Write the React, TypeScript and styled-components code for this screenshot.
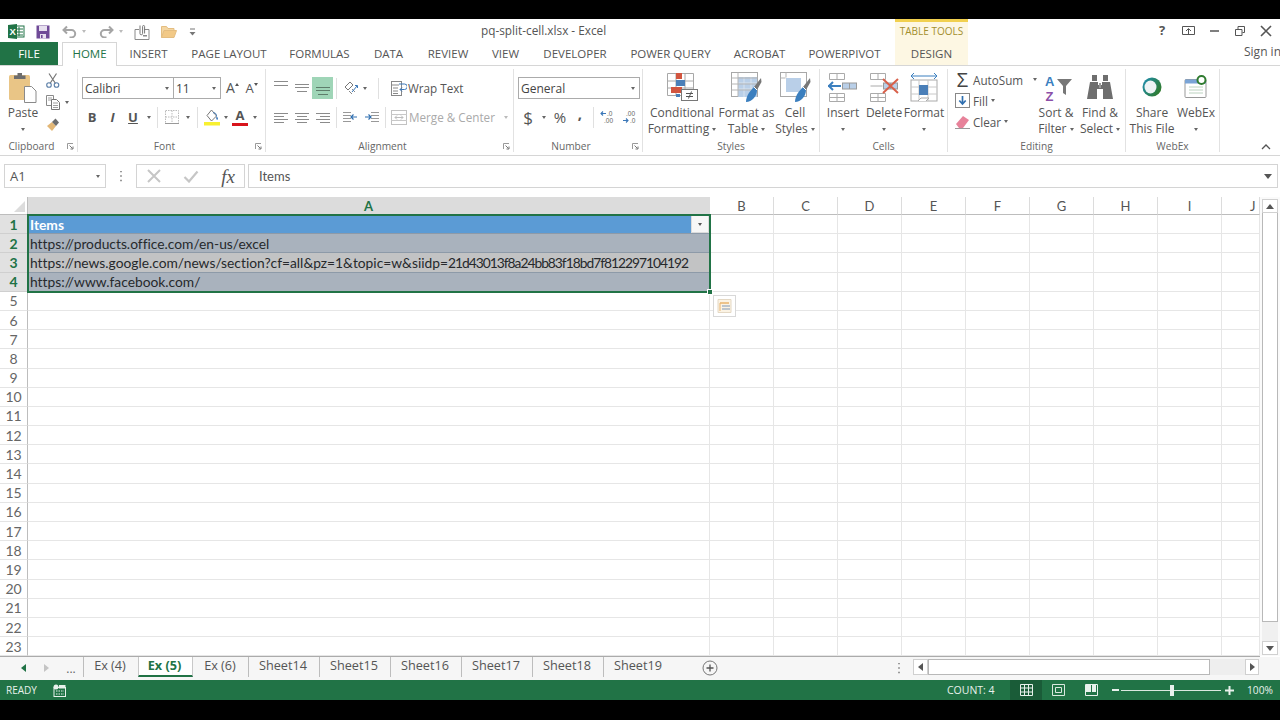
import React from "react";
import styled, { createGlobalStyle } from "styled-components";

const Global = createGlobalStyle`
  html, body { margin: 0; padding: 0; background: #000; overflow: hidden; }
  * { box-sizing: border-box; }
`;
const UI = `"Open Sans", "Noto Sans", "Liberation Sans", sans-serif`;
const INK = "#555";

const Page = styled.div`
  width: 1280px; height: 720px; background: #000; padding: 19px 0 20px;
  font-family: ${UI}; color: ${INK};
`;
const Win = styled.div`
  width: 1280px; height: 681px; background: #fff; display: flex; flex-direction: column; overflow: hidden;
`;
const Svg = styled.svg`display: block; flex: none;`;
const Ic = ({ w, h, children }: { w: number; h: number; children: React.ReactNode }) => (
  <Svg width={w} height={h} viewBox={`0 0 ${w} ${h}`} fill="none">{children}</Svg>
);
const Slot = styled.span<{ $w: number; $ml?: number }>`
  display: inline-flex; align-items: center; justify-content: center; flex: none;
  width: ${p => p.$w}px; height: 100%; margin-left: ${p => p.$ml ?? 0}px;
`;

/* ---- title bar ---- */
const TitleBar = styled.div`display: flex; height: 23px; align-items: stretch; background: #fff;`;
const Qat = styled.div`display: flex; width: 481px; padding-left: 8px; align-items: center; padding-top: 2px;`;
const TitleText = styled.div`width: 414px; font-size: 11.8px; line-height: 23px; color: #555; white-space: nowrap;`;
const TableTools = styled.div`
  width: 73px; background: #fdf7e3; border-top: 3px solid #f1d04f; color: #a38f2e;
  font-size: 10px; line-height: 19px; text-align: center; white-space: nowrap;
`;
const WinCtrls = styled.div`display: flex; margin-left: auto; width: 312px; padding-left: 188px; align-items: center;`;

/* ---- tabs ---- */
const TabRow = styled.div`display: flex; height: 24px; background: #fff; border-bottom: 1px solid #d6d6d6;`;
const FileTab = styled.div`
  width: 58px; height: 23px; background: #217346; color: #fff; font-size: 11.6px; line-height: 23px; text-align: center; margin-right: 4px;
`;
const Tab = styled.div<{ $w: number; $active?: boolean; $ctx?: boolean; $ml?: number }>`
  width: ${p => p.$w}px; height: ${p => (p.$active ? 24 : 23)}px; flex: none; text-align: center; font-size: 11.5px; line-height: 23px;
  white-space: nowrap; margin-left: ${p => p.$ml ?? 0}px;
  color: ${p => (p.$active ? "#217346" : "#555")};
  background: ${p => (p.$ctx ? "#fdf7e3" : "#fff")};
  ${p => (p.$active ? "border: 1px solid #d6d6d6; border-bottom: 0; line-height: 22px;" : "")}
`;
const SignIn = styled.div`margin-left: auto; font-size: 12px; line-height: 19px; color: #555; width: 36px; white-space: nowrap;`;

/* ---- ribbon ---- */
const Ribbon = styled.div`display: flex; height: 90px; padding-top: 3px; background: #fff; border-bottom: 1px solid #d6d6d6;`;
const Group = styled.div<{ $w: number; $last?: boolean }>`
  width: ${p => p.$w}px; height: 83px; flex: none; display: flex; flex-direction: column;
  border-right: ${p => (p.$last ? 0 : "1px solid #e2e2e2")};
`;
const GroupBody = styled.div`flex: 1; height: 70px; display: flex; min-height: 0;`;
const GroupFoot = styled.div`display: flex; height: 13px; padding-top: 2px; align-items: center; font-size: 10.2px; color: #666;`;
const FootLabel = styled.div`flex: 1; text-align: center; white-space: nowrap; line-height: 11px;`;
const Launcher = styled.div`width: 14px; display: flex; justify-content: center;`;
const CollapseWrap = styled.div`flex: 1; display: flex; justify-content: flex-end; padding-right: 9px;`;
const Big = styled.div<{ $w: number; $ml?: number }>`
  width: ${p => p.$w}px; flex: none; margin-left: ${p => p.$ml ?? 0}px; display: flex; flex-direction: column; align-items: center;
`;
const BigIcon = styled.div`height: 36px; display: flex; align-items: center; justify-content: center;`;
const BigLabel = styled.div`font-size: 12px; line-height: 16px; height: 16px; white-space: nowrap; text-align: center; color: #555;`;
const Caret = styled.span<{ $ml?: number; $c?: string; $up?: boolean; $raise?: number }>`
  display: inline-block; flex: none; width: 0; height: 0; vertical-align: middle;
  border-left: 2.5px solid transparent; border-right: 2.5px solid transparent;
  ${p => (p.$up ? `border-bottom: 3px solid ${p.$c ?? "#666"};` : `border-top: 3px solid ${p.$c ?? "#666"};`)}
  margin-left: ${p => p.$ml ?? 0}px; margin-bottom: ${p => p.$raise ?? 0}px;
`;
const Stack = styled.div<{ $pt?: number; $gap?: number; $pl?: number; $w?: number }>`
  display: flex; flex-direction: column; flex: none; padding-top: ${p => p.$pt ?? 8}px; padding-left: ${p => p.$pl ?? 0}px; gap: ${p => p.$gap ?? 7}px;
  ${p => (p.$w ? `width: ${p.$w}px;` : "")}
`;
const RRow = styled.div<{ $h?: number }>`display: flex; align-items: center; height: ${p => p.$h ?? 22}px;`;
const Sep = styled.span<{ $ml: number; $mr: number }>`
  display: block; flex: none; width: 1px; height: 21px; background: #e0e0e0; margin: 0 ${p => p.$mr}px 0 ${p => p.$ml}px;
`;
const Combo = styled.div<{ $w: number; $ml?: number }>`
  width: ${p => p.$w}px; height: 22px; flex: none; border: 1px solid #ababab; background: #fff; margin-left: ${p => p.$ml ?? 0}px;
  display: flex; align-items: center; justify-content: space-between; padding: 0 4px 0 2px; font-size: 12px; color: #444;
`;
const Glyph = styled.span<{ $bold?: boolean; $it?: boolean; $u?: boolean; $size?: number; $c?: string; $ff?: string; $raise?: number }>`
  font-size: ${p => p.$size ?? 13}px; font-weight: ${p => (p.$bold ? 700 : 400)}; font-style: ${p => (p.$it ? "italic" : "normal")};
  text-decoration: ${p => (p.$u ? "underline" : "none")}; color: ${p => p.$c ?? "#555"}; line-height: 1;
  font-family: ${p => p.$ff ?? UI}; margin-bottom: ${p => p.$raise ?? 0}px;
`;
const ColorA = styled.span`display: flex; flex-direction: column; align-items: center; width: 16px; flex: none;`;
const ColorBar = styled.span`display: block; width: 16px; height: 3px; background: #d8141c; margin-top: 1px;`;
const SmallBtn = styled.div<{ $grey?: boolean; $w?: number; $ml?: number }>`
  display: flex; align-items: center; gap: 2px; font-size: 11.7px; white-space: nowrap; color: ${p => (p.$grey ? "#aaa" : "#555")};
  width: ${p => (p.$w ? p.$w + "px" : "auto")}; margin-left: ${p => p.$ml ?? 0}px;
`;
const Highlight = styled.span`
  display: inline-flex; width: 21px; height: 22px; background: #9fd5b7; align-items: center; justify-content: center; flex: none;
`;

/* ---- formula bar ---- */
const FormulaBar = styled.div`display: flex; height: 41px; padding: 8px 2px 9px 4px; background: #fff;`;
const NameBox = styled.div`
  width: 102px; border: 1px solid #d4d4d4; display: flex; align-items: center; justify-content: space-between;
  padding: 0 5px; font-size: 13px; color: #555; background: #fff;
`;
const Grip = styled.div`width: 30px; display: flex; align-items: center; justify-content: center;`;
const FxBox = styled.div`
  width: 109px; border: 1px solid #d4d4d4; display: flex; align-items: center; justify-content: space-between; padding: 0 9px 0 10px;
`;
const FxInput = styled.div`
  flex: 1; margin-left: 3px; border: 1px solid #d4d4d4; display: flex; align-items: center; justify-content: space-between;
  padding: 0 5px 0 10px; font-size: 13px; color: #555; font-family: "Lato", ${UI};
`;

/* ---- sheet ---- */
const Sheet = styled.div`display: flex; height: 460px; background: #fff;`;
const Grid = styled.div`
  position: relative; width: 1260px; height: 460px; overflow: hidden; display: grid; border-bottom: 1px solid #ababab;
  grid-template-columns: 28px 682px repeat(8, 64px) 38px; grid-template-rows: 18px repeat(23, 19.2px);
`;
const ColHead = styled.div<{ $on?: boolean; $pl?: number }>`
  display: flex; align-items: center; justify-content: ${p => (p.$pl ? "flex-start" : "center")}; padding-left: ${p => p.$pl ?? 0}px;
  border-right: 1px solid #dcdcdc; border-bottom: 1px solid #bdbdbd; font-size: 13px; font-family: "Lato", ${UI};
  background: ${p => (p.$on ? "#dcdcdc" : "#fff")}; color: ${p => (p.$on ? "#217346" : "#555")}; font-weight: ${p => (p.$on ? 700 : 400)};
`;
const Corner = styled.div`
  background: #fff; border-right: 1px solid #bdbdbd; border-bottom: 1px solid #bdbdbd; display: flex; align-items: flex-end; justify-content: flex-end; padding: 0 2px 2px 0;
`;
const RowHead = styled.div<{ $on?: boolean }>`
  display: flex; align-items: center; justify-content: center; font-size: 14px; font-family: "Lato", ${UI};
  border-right: 1px solid #bdbdbd; border-bottom: 1px solid ${p => (p.$on ? "#cfcfcf" : "#e4e4e4")};
  background: ${p => (p.$on ? "#e1e1e1" : "#fff")}; color: ${p => (p.$on ? "#217346" : "#666")}; font-weight: ${p => (p.$on ? 700 : 400)};
`;
const Cell = styled.div<{ $tone?: string }>`
  display: flex; align-items: center; justify-content: space-between; white-space: nowrap; padding-left: 2px;
  border-right: 1px solid #e6e6e6; border-bottom: 1px solid #e6e6e6;
  background: ${p => (p.$tone === "head" ? "#5b9bd5" : p.$tone === "a" ? "#a9b2bd" : p.$tone === "b" ? "#c2c3c4" : "#fff")};
  ${p => (p.$tone ? "border-color: #8d9aa8;" : "")}
`;
const CellText = styled.span<{ $head?: boolean }>`
  font-family: "Lato", ${UI}; font-size: 13.8px; font-variant-ligatures: none; color: ${p => (p.$head ? "#fff" : "#26292c")}; font-weight: ${p => (p.$head ? 700 : 400)};
`;
const Tight = styled.span`letter-spacing: -1px;`;
const FilterBtn = styled.span`
  display: flex; width: 18px; height: 18px; background: #f7f7f7; align-items: center; justify-content: center; border: 1px solid #dcdcdc;
`;
const Selection = styled.div`
  position: absolute; left: 27px; top: 17px; width: 684px; height: 79px; border: 2px solid #217346; pointer-events: none;
`;
const FillHandle = styled.div`
  position: absolute; right: -4px; bottom: -4px; width: 6px; height: 6px; background: #217346; border: 1px solid #fff;
`;
const QuickBtn = styled.div`
  position: absolute; left: 713px; top: 98px; width: 23px; height: 22px; background: #fff; border: 1px solid #d8d8d8;
  display: flex; align-items: center; justify-content: center;
`;
const VScroll = styled.div`width: 20px; display: flex; flex-direction: column; padding: 2px 2px 1px; background: #fafafa; border-bottom: 1px solid #fff;`;
const ScrollBtn = styled.div<{ $w?: number; $h?: number }>`
  width: ${p => p.$w ?? 16}px; height: ${p => p.$h ?? 14}px; flex: none; background: #fff; border: 1px solid #d0d0d0; display: flex; align-items: center; justify-content: center;
`;
const VThumb = styled.div`width: 16px; height: 409px; margin-top: 0; background: #fff; border: 1px solid #b8b8b8; border-top: 0; flex: none;`;
const VTrack = styled.div`flex: 1; background: #f0f0f0;`;

/* ---- sheet tabs ---- */
const TabsBar = styled.div`display: flex; height: 23px; background: #f6f6f6; align-items: stretch;`;
const Nav = styled.div`width: 83px; display: flex; align-items: center; padding-left: 21px; padding-bottom: 1px; flex: none; font-size: 12px; color: #666;`;
const SheetTab = styled.div<{ $w: number; $on?: boolean; $sep?: boolean }>`
  width: ${p => p.$w}px; flex: none; height: 20px; padding: 0 2px ${p => (p.$on ? 2 : 4)}px 0; display: flex; align-items: center; justify-content: center; font-size: 12.7px; white-space: nowrap;
  color: ${p => (p.$on ? "#217346" : "#555")}; font-weight: ${p => (p.$on ? 700 : 400)};
  background: ${p => (p.$on ? "#fff" : "transparent")};
  border-left: 1px solid ${p => (p.$sep ? "#bdbdbd" : "transparent")};
  ${p => (p.$on ? "border-bottom: 2px solid #217346; border-left: 1px solid #c8c8c8; border-right: 1px solid #c8c8c8;" : "")}
`;
const AddSheet = styled.div`width: 18px; height: 16px; margin: 3px 0 0 27px; flex: none;`;
const HDots = styled.div`margin-left: 173px; width: 14px; display: flex; align-items: center; justify-content: center; flex: none;`;
const HScroll = styled.div`width: 346px; margin-left: 7px; height: 16px; margin-top: 2px; display: flex; background: #eeeeee; flex: none;`;
const HThumb = styled.div`width: 282px; height: 16px; background: #fff; border: 1px solid #b8b8b8;`;
const HTrack = styled.div`flex: 1;`;

/* ---- status ---- */
const Status = styled.div`display: flex; height: 20px; background: #217346; color: #e8f1ec; align-items: center; font-size: 10.5px;`;
const Ready = styled.span`margin-left: 6px; width: 47px; font-size: 10px;`;
const Count = styled.span`margin-left: 881px; width: 63px; font-size: 10.5px; white-space: nowrap;`;
const ViewBtn = styled.div<{ $on?: boolean; $w: number }>`
  width: ${p => p.$w}px; height: 20px; flex: none; display: flex; align-items: center; justify-content: center; background: ${p => (p.$on ? "#1a5c38" : "transparent")};
`;
const ZoomTrack = styled.div`position: relative; width: 100px; height: 1px; background: #d9e8df; margin: 0 2px; flex: none;`;
const ZoomThumb = styled.div`position: absolute; left: 49px; top: -5px; width: 4px; height: 11px; background: #e8f1ec;`;
const Pct = styled.span`margin-left: 14px; font-size: 10.2px; white-space: nowrap;`;

/* ---- icons ---- */
const ExcelLogo = () => (
  <Ic w={17} h={15}>
    <rect x="7" y="2" width="9" height="11" fill="#fff" stroke="#217346" />
    <path d="M8 5h7M8 8h7M8 11h7M11 3v9" stroke="#217346" />
    <path d="M0 1l9-1v15l-9-1z" fill="#217346" />
    <text x="1.6" y="11" fontSize="9.5" fontWeight="700" fill="#fff" fontFamily="Liberation Sans">X</text>
  </Ic>
);
const Floppy = () => (
  <Ic w={14} h={14}>
    <rect x="0.5" y="0.5" width="13" height="13" fill="#6f4a97" />
    <rect x="3" y="1" width="8" height="5" fill="#e7e0ef" />
    <rect x="4" y="9" width="6" height="4.5" fill="#e7e0ef" />
    <rect x="5" y="10" width="1.6" height="3" fill="#6f4a97" />
  </Ic>
);
const Undo = ({ flip }: { flip?: boolean }) => (
  <Ic w={15} h={13}>
    <g transform={flip ? "translate(15 0) scale(-1 1)" : undefined}>
      <path d="M5 1.5L1.5 5 5 8.5M1.5 5H9.5a3.7 3.7 0 0 1 0 7.4H7.5" stroke="#a5a5a5" strokeWidth="2" />
    </g>
  </Ic>
);
const Attach = () => (
  <Ic w={16} h={16}>
    <path d="M1 5.5h4M10 5.5h5v10H1v-10" stroke="#8a8a8a" />
    <path d="M6 1.5v8a1.3 1.3 0 0 0 2.6 0V2.5a1 1 0 0 1 2 0v7" stroke="#777" fill="none" />
    <rect x="9" y="11" width="4" height="1.5" fill="#8a8a8a" />
  </Ic>
);
const Folder = () => (
  <Ic w={16} h={13}>
    <path d="M0.5 12.5V1.5h5l1.5 2h6v2" fill="#f4d6a2" stroke="#e4bd80" />
    <path d="M0.5 12.5l2.5-7h12.5l-2.5 7z" fill="#f2c987" stroke="#e4bd80" />
  </Ic>
);
const QatMore = () => (
  <Ic w={7} h={8}>
    <path d="M1 1h5" stroke="#777" /><path d="M0.5 4h6l-3 3.5z" fill="#777" />
  </Ic>
);
const Paste = () => (
  <Ic w={28} h={31}>
    <rect x="0" y="3" width="21" height="25" rx="1.5" fill="#e9c586" />
    <path d="M5 3.5h3.5V1h4.5v2.5h3.5V7H5z" fill="#6d6d6d" />
    <path d="M15.5 14.5h7l4.5 4.5v11.5H15.5z" fill="#fff" stroke="#8a8a8a" />
  </Ic>
);
const Scissors = () => (
  <Ic w={14} h={15}>
    <path d="M3 0.5l6.5 10M10.5 0.5l-6.5 10" stroke="#777" strokeWidth="1.2" />
    <circle cx="3" cy="12" r="2.3" stroke="#5b7fa8" strokeWidth="1.1" />
    <circle cx="10.5" cy="12" r="2.3" stroke="#5b7fa8" strokeWidth="1.1" />
  </Ic>
);
const Copy = () => (
  <Ic w={15} h={15}>
    <path d="M0.5 0.5h7v10h-7z" fill="#fff" stroke="#8a8a8a" />
    <path d="M5.5 4.5h5l3 3v7h-8z" fill="#fff" stroke="#777" />
    <path d="M2 3h4M2 5h3M7 8h5M7 10.5h5M7 12.5h5" stroke="#a0a0a0" />
  </Ic>
);
const Painter = () => (
  <Ic w={14} h={13}>
    <path d="M1 8l5-4 4 4-4 5z" fill="#e3b776" />
    <path d="M6 4l4 4 3-3.5-3.5-4z" fill="#6d6d6d" />
  </Ic>
);
const Launch = () => (
  <Ic w={7} h={7}>
    <path d="M0.5 6V0.5H6" stroke="#9a9a9a" /><path d="M2.5 2.5l3 3M6 3.5V6H3.5" stroke="#777" />
  </Ic>
);
const Borders = () => (
  <Ic w={14} h={14}>
    <path d="M.5.5h13v13H.5z" stroke="#bbb" strokeDasharray="1.5 1" />
    <path d="M7 .5v13M.5 7h13" stroke="#bbb" strokeDasharray="1.5 1" />
    <path d="M0 13.5h14" stroke="#999" />
  </Ic>
);
const FillColor = () => (
  <Ic w={17} h={17}>
    <path d="M7.5 1l5 6-5 5-4.5-5.5z" fill="#fff" stroke="#777" />
    <path d="M12.5 7c1.5 2 2 3 1 3.7-1 .5-1.7-.7-1-3.7z" fill="#3b77b8" />
    <path d="M9 4c2-1 3.5 1 3.5 3" stroke="#3b77b8" />
    <rect x="0" y="13" width="16" height="3.5" fill="#f8f030" />
  </Ic>
);
const Lines = ({ rows, c = "#8b8b8b", w = 14, h = 14 }: { rows: number[][]; c?: string; w?: number; h?: number }) => (
  <Ic w={w} h={h}>
    {rows.map(([a, b, y], i) => <path key={i} d={`M${a} ${y}H${b}`} stroke={c} strokeWidth="1" />)}
  </Ic>
);
const Orientation = () => (
  <Ic w={15} h={14}>
    <path d="M1 6l5-5 3 3-5 5z" stroke="#777" />
    <path d="M5 10l3 3M8 8l3 3" stroke="#888" />
    <path d="M8 11l5-6M11 4.5h2.5V7" stroke="#3b77b8" />
  </Ic>
);
const WrapIcon = () => (
  <Ic w={16} h={15}>
    <rect x="0.5" y="0.5" width="10" height="14" fill="#fff" stroke="#888" />
    <path d="M0 4h8M2 7h5M2 10h5M2 12.5h5" stroke="#888" />
    <path d="M8 3h5.5a2 2 0 0 1 0 5.5H9M11 6.5L9 8.5l2 2" stroke="#3b77b8" />
  </Ic>
);
const Indent = ({ flip }: { flip?: boolean }) => (
  <Ic w={15} h={11}>
    <g transform={flip ? "translate(15 0) scale(-1 1)" : undefined}>
      <path d="M7 .5h8M7 3.5h8M7 6.5h8M7 9.5h8" stroke="#999" />
      <path d="M1 5h6M4.5 2.5L7 5 4.5 7.5" stroke="#2f6fb0" strokeWidth="1.2" />
    </g>
  </Ic>
);
const MergeIcon = () => (
  <Ic w={16} h={15}>
    <rect x="0.5" y="0.5" width="15" height="14" stroke="#c2c2c2" />
    <path d="M0 4.5h16M0 10.5h16" stroke="#c8c8c8" />
    <path d="M4 7.5h8M4 7.5l2-2M4 7.5l2 2M12 7.5l-2-2M12 7.5l-2 2" stroke="#bdbdbd" />
  </Ic>
);
const DecInc = ({ flip }: { flip?: boolean }) => (
  <Ic w={15} h={14}>
    {flip ? <path d="M1 10.5h5M4 8.5l2 2-2 2" stroke="#3b77b8" strokeWidth="1.1" /> : <path d="M1 3.5h5M3 1.5l-2 2 2 2" stroke="#3b77b8" strokeWidth="1.1" />}
    <text x={flip ? 4 : 7} y="6" fontSize="6.5" fill="#666" fontFamily="Liberation Sans">{flip ? ".00" : ".0"}</text>
    <text x={flip ? 8 : 4} y="13" fontSize="6.5" fill="#666" fontFamily="Liberation Sans">{flip ? ".0" : ".00"}</text>
  </Ic>
);
const CondFmt = () => (
  <Ic w={31} h={28}>
    <path d="M.5.5h26v22H.5zM9 .5v22M18 .5v22M.5 8h26M.5 15h26" stroke="#a8a8a8" />
    <rect x="9" y="0" width="6" height="6" fill="#d2553f" /><rect x="9" y="7" width="9" height="6" fill="#4a7fb8" />
    <rect x="4" y="14" width="5" height="6" fill="#d2553f" /><rect x="9" y="14" width="6" height="6" fill="#d2553f" /><rect x="9" y="21" width="4" height="3" fill="#4a7fb8" />
    <rect x="14.5" y="16.5" width="16" height="11" fill="#fff" stroke="#777" />
    <path d="M19 20.5h7M19 23.5h7M24.5 18.5l-3 7" stroke="#555" />
  </Ic>
);
const TableFmt = ({ inset }: { inset?: boolean }) => (
  <Ic w={31} h={31}>
    <rect x="0.5" y="0.5" width="26" height="24" fill="#fff" stroke="#a8a8a8" />
    {inset ? <rect x="6" y="6" width="15" height="14" fill="#b9cfe8" /> : <rect x="7" y="5" width="19" height="20" fill="#b9cfe8" />}
    {!inset && <path d="M7 11h19M7 17h19M13 5v20M20 5v20" stroke="#d8e3ef" />}
    {!inset && <path d="M.5 6h26M.5 12h26M.5 18h26M7 .5v24" stroke="#b5b5b5" />}
    {inset && <path d="M.5 6h5M6 .5v5" stroke="#b5b5b5" />}
    <path d="M30 6l-7 9 3 3 4.5-8z" fill="#777" />
    <path d="M15 30c0-7 5-12 8-15l3 3c0 6-5 12-11 12z" fill="#3b7fbf" />
    <path d="M23 15l3 3" stroke="#fff" />
  </Ic>
);
const CellOps = ({ kind }: { kind: "ins" | "del" }) => (
  <Ic w={30} h={30}>
    <path d="M1.5 1.5h15v6h-15zM9 1.5v6M1.5 21.5h15v8h-15zM1.5 25.5h15M9 21.5v8" stroke="#aaa" />
    <rect x="14.5" y="11" width="14" height="6" fill="#b9cfe8" stroke="#9a9a9a" />
    <path d="M21.5 11v6" stroke="#9a9a9a" />
    {kind === "ins"
      ? <path d="M0 14h13M5 10l-4 4 4 4" stroke="#3b7fbf" strokeWidth="2" />
      : <path d="M14 7l15 14M29 7L14 21" stroke="#d8604a" strokeWidth="2" />}
    {kind === "del" && <path d="M1.5 14h12" stroke="#aaa" />}
  </Ic>
);
const FormatIco = () => (
  <Ic w={28} h={30}>
    <path d="M1 4h26M1 4l3-3M1 4l3 3M27 4l-3-3M27 4l-3 3" stroke="#3b7fbf" />
    <rect x="1" y="8" width="26" height="21" fill="#fff" stroke="#aaa" />
    <path d="M1 15h26M1 22h26M9 8v21M18 8v21" stroke="#c8c8c8" />
    <rect x="9" y="13" width="9" height="10" fill="#4a7fb8" />
    <path d="M8 29l3-3h8l-3 3" fill="#fff" stroke="#aaa" />
  </Ic>
);
const FillDown = () => (
  <Ic w={15} h={15}>
    <rect x="0.5" y="0.5" width="14" height="14" fill="#fff" stroke="#888" />
    <path d="M7.5 3v8M4.3 7.5l3.2 3.5 3.2-3.5" stroke="#2f6fb0" strokeWidth="1.7" />
  </Ic>
);
const Eraser = () => (
  <Ic w={15} h={14}>
    <path d="M1 9l7-8 6 4-6 8H4z" fill="#e7829a" />
    <path d="M0 13.5h15" stroke="#999" />
  </Ic>
);
const SortIco = () => (
  <Ic w={36} h={29}>
    <text x="7" y="12.5" fontSize="13" fontWeight="700" fill="#3b7fbf" fontFamily="Liberation Sans">A</text>
    <text x="7.5" y="27.5" fontSize="13" fontWeight="700" fill="#8b4fa8" fontFamily="Liberation Sans">Z</text>
    <path d="M19 6h15l-6 7v9l-3-2v-7z" fill="#777" />
  </Ic>
);
const Binoculars = () => (
  <Ic w={28} h={26}>
    <path d="M6 1h5v6H6zM17 1h5v6h-5z" fill="#6e6e6e" />
    <path d="M4 8h8v3h4V8h8l3 17h-10v-10h-6v10H1z" fill="#6e6e6e" />
    <path d="M13 9h2v5h-2z" fill="#9a9a9a" />
  </Ic>
);
const WebexBall = () => (
  <Ic w={20} h={20}>
    <defs>
      <linearGradient id="wx" x1="0" y1="0" x2="1" y2="0.6"><stop offset="0" stopColor="#1d8fb8" /><stop offset="1" stopColor="#2f7b2f" /></linearGradient>
    </defs>
    <circle cx="10" cy="10" r="9.5" fill="url(#wx)" />
    <ellipse cx="8.5" cy="10" rx="6" ry="6.5" fill="#eef3f5" />
  </Ic>
);
const WebexWin = () => (
  <Ic w={24} h={24}>
    <rect x="1" y="4.5" width="21" height="18" rx="1" fill="#fff" stroke="#999" />
    <rect x="1" y="4.5" width="21" height="4" fill="#7aa4d6" />
    <path d="M5 12h14M5 15h14M5 18h14" stroke="#bcd3c0" />
    <circle cx="17.5" cy="5" r="4" fill="#fff" stroke="#2f7b2f" strokeWidth="2" />
  </Ic>
);
const X = ({ c = "#555", s = 12, sw = 1.6 }: { c?: string; s?: number; sw?: number }) => (
  <Ic w={s} h={s}><path d={`M1 1L${s - 1} ${s - 1}M${s - 1} 1L1 ${s - 1}`} stroke={c} strokeWidth={sw} /></Ic>
);
const Check = () => (
  <Ic w={16} h={13}><path d="M1.5 7l4.5 4.5L14.5 1.5" stroke="#c6c6c6" strokeWidth="2.2" /></Ic>
);
const Dots = ({ c = "#999" }: { c?: string }) => (
  <Ic w={2} h={11}><path d="M0 .5h2M0 5h2M0 9.5h2" stroke={c} strokeWidth="1.5" /></Ic>
);
const Tri = ({ d, c = "#666" }: { d: "l" | "r" | "u" | "d"; c?: string }) => {
  const p = { l: "M5 0v8L0 4z", r: "M0 0v8l5-4z", u: "M0 5h8L4 0z", d: "M0 0h8L4 5z" }[d];
  const horiz = d === "l" || d === "r";
  return <Ic w={horiz ? 5 : 8} h={horiz ? 8 : 5}><path d={p} fill={c} /></Ic>;
};
const Quick = () => (
  <Ic w={15} h={14}>
    <path d="M1 .5h13v13H1z" fill="#fbf3e4" stroke="#e4d8c4" />
    <path d="M3 4h9" stroke="#e9b36c" strokeWidth="1.5" /><path d="M5 7h8M5 10h8" stroke="#a9b6c4" strokeWidth="1.5" /><path d="M3 4v8" stroke="#e9b36c" />
  </Ic>
);
const NormalView = () => (
  <Ic w={13} h={12}><path d="M.5.5h12v11H.5zM.5 4h12M.5 8h12M4.5.5v11M8.5.5v11" stroke="#e8f1ec" /></Ic>
);
const LayoutView = () => (
  <Ic w={13} h={12}><path d="M.5.5h12v11H.5z" stroke="#d9e8df" /><path d="M3.5 3.5h6v5h-6z" stroke="#d9e8df" /></Ic>
);
const BreakView = () => (
  <Ic w={13} h={12}><path d="M.5.5h12v11H.5z" stroke="#e8f1ec" /><rect x="1" y="0" width="5" height="8" fill="#e8f1ec" /><rect x="7" y="0" width="4" height="8" fill="#e8f1ec" /></Ic>
);
const MacroIco = () => (
  <Ic w={13} h={13}>
    <circle cx="3" cy="3" r="2.5" fill="#e8f1ec" />
    <rect x="1" y="3.5" width="11.5" height="9" fill="none" stroke="#e8f1ec" />
    <rect x="6" y="1" width="6.5" height="3.5" fill="#e8f1ec" />
    <path d="M3 7h8M3 10h8" stroke="#e8f1ec" strokeDasharray="1.5 1" />
  </Ic>
);

/* ---- data ---- */
const tabs: [string, number][] = [
  ["INSERT", 63], ["PAGE LAYOUT", 98], ["FORMULAS", 83], ["DATA", 55], ["REVIEW", 64], ["VIEW", 51],
  ["DEVELOPER", 88], ["POWER QUERY", 103], ["ACROBAT", 75], ["POWERPIVOT", 95],
];
const cols = ["B", "C", "D", "E", "F", "G", "H", "I"];
const urls: Record<number, React.ReactNode> = {
  2: "https://products.office.com/en-us/excel",
  3: <>https://news.google.com/news/section?cf=all&amp;pz=1&amp;topic=w&amp;siidp=<Tight>21d43013f8a24bb83f18bd7f812297104192</Tight></>,
  4: "https://www.facebook.com/",
};
const sheets: [string, number, boolean?][] = [["Ex (4)", 55], ["Ex (5)", 55, true], ["Ex (6)", 55], ["Sheet14", 71], ["Sheet15", 71], ["Sheet16", 71], ["Sheet17", 71], ["Sheet18", 71], ["Sheet19", 71]];

const Foot = ({ label, launch }: { label: string; launch?: boolean }) => (
  <GroupFoot>
    <FootLabel>{label}</FootLabel>
    {launch && <Launcher><Launch /></Launcher>}
  </GroupFoot>
);

export default function App() {
  return (
    <Page>
      <Global />
      <Win>
        <TitleBar>
          <Qat>
            <ExcelLogo />
            <Slot $w={14} $ml={11}><Floppy /></Slot>
            <Slot $w={15} $ml={12}><Undo /></Slot>
            <Slot $w={7} $ml={3}><Caret $c="#bbb" /></Slot>
            <Slot $w={15} $ml={12}><Undo flip /></Slot>
            <Slot $w={7} $ml={3}><Caret $c="#bbb" /></Slot>
            <Slot $w={16} $ml={10}><Attach /></Slot>
            <Slot $w={16} $ml={11}><Folder /></Slot>
            <Slot $w={7} $ml={12}><QatMore /></Slot>
          </Qat>
          <TitleText>pq-split-cell.xlsx - Excel</TitleText>
          <TableTools>TABLE TOOLS</TableTools>
          <WinCtrls>
            <Slot $w={14} $ml={-1}><Glyph $size={13} $bold>?</Glyph></Slot>
            <Slot $w={14} $ml={12}>
              <Ic w={13} h={9}><path d="M.5.5h12v8H.5z" stroke="#555" /><path d="M6.5 8V3M4 5l2.5-2.5L9 5" stroke="#555" /></Ic>
            </Slot>
            <Slot $w={12} $ml={13}><Ic w={9} h={2}><path d="M0 1h9" stroke="#555" strokeWidth="1.5" /></Ic></Slot>
            <Slot $w={12} $ml={14}>
              <Ic w={10} h={10}><path d="M.5 3.5h6.5v6H.5zM3 3V.5h6.5v6H7.5" stroke="#555" /></Ic>
            </Slot>
            <Slot $w={12} $ml={14}><X /></Slot>
          </WinCtrls>
        </TitleBar>

        <TabRow>
          <FileTab>FILE</FileTab>
          <Tab $w={55} $active>HOME</Tab>
          {tabs.map(([t, w]) => <Tab key={t} $w={w}>{t}</Tab>)}
          <Tab $w={73} $ctx $ml={3}>DESIGN</Tab>
          <SignIn>Sign in</SignIn>
        </TabRow>

        <Ribbon>
          <Group $w={78}>
            <GroupBody>
              <Big $w={46}>
                <BigIcon><Paste /></BigIcon>
                <BigLabel>Paste</BigLabel>
                <BigLabel><Caret /></BigLabel>
              </Big>
              <Stack $pt={3} $gap={5}>
                <RRow $h={17}><Scissors /></RRow>
                <RRow $h={17}><Copy /><Caret $ml={4} /></RRow>
                <RRow $h={17}><Painter /></RRow>
              </Stack>
            </GroupBody>
            <Foot label="Clipboard" launch />
          </Group>

          <Group $w={188}>
            <GroupBody>
              <Stack $pl={4}>
                <RRow>
                  <Combo $w={92}>Calibri<Caret /></Combo>
                  <Combo $w={48} $ml={-1}>11<Caret /></Combo>
                  <Slot $w={19} $ml={2}><Glyph $size={14}>A</Glyph><Caret $c="#555" $up $raise={8} /></Slot>
                  <Slot $w={19}><Glyph $size={13}>A</Glyph><Caret $c="#555" $raise={8} /></Slot>
                </RRow>
                <RRow>
                  <Slot $w={20}><Glyph $bold $size={13}>B</Glyph></Slot>
                  <Slot $w={21}><Glyph $it $bold $size={13}>I</Glyph></Slot>
                  <Slot $w={20}><Glyph $u $bold $size={13}>U</Glyph></Slot>
                  <Slot $w={11}><Caret /></Slot>
                  <Sep $ml={3} $mr={3} />
                  <Slot $w={21}><Borders /></Slot>
                  <Slot $w={11}><Caret /></Slot>
                  <Sep $ml={4} $mr={5} />
                  <Slot $w={18}><FillColor /></Slot>
                  <Slot $w={10}><Caret /></Slot>
                  <Slot $w={20} $ml={-1}>
                    <ColorA>
                      <Glyph $size={13} $bold>A</Glyph>
                      <ColorBar />
                    </ColorA>
                  </Slot>
                  <Slot $w={10}><Caret /></Slot>
                </RRow>
              </Stack>
            </GroupBody>
            <Foot label="Font" launch />
          </Group>

          <Group $w={248}>
            <GroupBody>
              <Stack $pl={5}>
                <RRow>
                  <Slot $w={20}><Lines rows={[[0, 14, 0.5], [0, 14, 4.5]]} /></Slot>
                  <Slot $w={21}><Lines rows={[[0, 14, 3.5], [0, 14, 6.5], [2, 12, 10.5]]} /></Slot>
                  <Highlight><Lines c="#5d7d6a" rows={[[0, 14, 6.5], [0, 14, 9.5], [2, 12, 13.5]]} /></Highlight>
                  <Sep $ml={3} $mr={6} />
                  <Slot $w={16}><Orientation /></Slot>
                  <Slot $w={11}><Caret /></Slot>
                  <Sep $ml={8} $mr={12} />
                  <WrapIcon />
                  <SmallBtn $ml={1}>Wrap Text</SmallBtn>
                </RRow>
                <RRow>
                  <Slot $w={20}><Lines rows={[[0, 14, 3.5], [0, 10, 6.5], [0, 14, 9.5], [0, 10, 12.5]]} /></Slot>
                  <Slot $w={21}><Lines rows={[[0, 14, 3.5], [2, 12, 6.5], [0, 14, 9.5], [2, 12, 12.5]]} /></Slot>
                  <Slot $w={21}><Lines rows={[[0, 14, 3.5], [4, 14, 6.5], [0, 14, 9.5], [4, 14, 12.5]]} /></Slot>
                  <Sep $ml={3} $mr={6} />
                  <Slot $w={15}><Indent flip /></Slot>
                  <Slot $w={15} $ml={6}><Indent /></Slot>
                  <Sep $ml={6} $mr={5} />
                  <MergeIcon />
                  <SmallBtn $grey $ml={2}>Merge &amp; Center<Caret $ml={7} $c="#bbb" /></SmallBtn>
                </RRow>
              </Stack>
            </GroupBody>
            <Foot label="Alignment" launch />
          </Group>

          <Group $w={129}>
            <GroupBody>
              <Stack $pl={4}>
                <RRow><Combo $w={122}>General<Caret /></Combo></RRow>
                <RRow>
                  <Slot $w={20}><Glyph $size={17}>$</Glyph></Slot>
                  <Slot $w={12}><Caret /></Slot>
                  <Slot $w={20}><Glyph $size={15}>%</Glyph></Slot>
                  <Slot $w={20}><Glyph $size={15} $bold $raise={8}>,</Glyph></Slot>
                  <Sep $ml={3} $mr={6} />
                  <Slot $w={15}><DecInc /></Slot>
                  <Slot $w={15} $ml={7}><DecInc flip /></Slot>
                </RRow>
              </Stack>
            </GroupBody>
            <Foot label="Number" launch />
          </Group>

          <Group $w={177}>
            <GroupBody>
              <Big $w={78}>
                <BigIcon><CondFmt /></BigIcon>
                <BigLabel>Conditional</BigLabel>
                <BigLabel>Formatting <Caret /></BigLabel>
              </Big>
              <Big $w={51}>
                <BigIcon><TableFmt /></BigIcon>
                <BigLabel>Format as</BigLabel>
                <BigLabel>Table <Caret /></BigLabel>
              </Big>
              <Big $w={46}>
                <BigIcon><TableFmt inset /></BigIcon>
                <BigLabel>Cell</BigLabel>
                <BigLabel>Styles <Caret /></BigLabel>
              </Big>
            </GroupBody>
            <Foot label="Styles" />
          </Group>

          <Group $w={128}>
            <GroupBody>
              <Big $w={46}>
                <BigIcon><CellOps kind="ins" /></BigIcon>
                <BigLabel>Insert</BigLabel>
                <BigLabel><Caret /></BigLabel>
              </Big>
              <Big $w={36}>
                <BigIcon><CellOps kind="del" /></BigIcon>
                <BigLabel>Delete</BigLabel>
                <BigLabel><Caret /></BigLabel>
              </Big>
              <Big $w={44}>
                <BigIcon><FormatIco /></BigIcon>
                <BigLabel>Format</BigLabel>
                <BigLabel><Caret /></BigLabel>
              </Big>
            </GroupBody>
            <Foot label="Cells" />
          </Group>

          <Group $w={178}>
            <GroupBody>
              <Stack $pt={0} $gap={0} $pl={7} $w={86}>
                <RRow $h={21}><Slot $w={15}><Glyph $size={20} $c="#444">Σ</Glyph></Slot><SmallBtn $ml={3}>AutoSum<Caret $ml={8} /></SmallBtn></RRow>
                <RRow $h={21}><FillDown /><SmallBtn $ml={3}>Fill<Caret $ml={1} /></SmallBtn></RRow>
                <RRow $h={21}><Eraser /><SmallBtn $ml={3}>Clear<Caret $ml={1} /></SmallBtn></RRow>
              </Stack>
              <Big $w={44}>
                <BigIcon><SortIco /></BigIcon>
                <BigLabel>Sort &amp;</BigLabel>
                <BigLabel>Filter <Caret /></BigLabel>
              </Big>
              <Big $w={44}>
                <BigIcon><Binoculars /></BigIcon>
                <BigLabel>Find &amp;</BigLabel>
                <BigLabel>Select <Caret /></BigLabel>
              </Big>
            </GroupBody>
            <Foot label="Editing" />
          </Group>

          <Group $w={94}>
            <GroupBody>
              <Big $w={52}>
                <BigIcon><WebexBall /></BigIcon>
                <BigLabel>Share</BigLabel>
                <BigLabel>This File</BigLabel>
              </Big>
              <Big $w={36}>
                <BigIcon><WebexWin /></BigIcon>
                <BigLabel>WebEx</BigLabel>
                <BigLabel><Caret /></BigLabel>
              </Big>
            </GroupBody>
            <Foot label="WebEx" />
          </Group>

          <Group $w={60} $last>
            <GroupBody />
            <GroupFoot>
              <CollapseWrap>
                <Ic w={10} h={6}><path d="M1 5l4-4 4 4" stroke="#555" strokeWidth="1.3" /></Ic>
              </CollapseWrap>
            </GroupFoot>
          </Group>
        </Ribbon>

        <FormulaBar>
          <NameBox>A1<Caret /></NameBox>
          <Grip><Dots /></Grip>
          <FxBox>
            <X c="#c6c6c6" s={14} sw={2} />
            <Check />
            <Glyph $size={19} $it $ff={`"Liberation Serif", serif`} $c="#555">fx</Glyph>
          </FxBox>
          <FxInput>Items<Tri d="d" c="#555" /></FxInput>
        </FormulaBar>

        <Sheet>
          <Grid>
            <Corner><Ic w={11} h={11}><path d="M11 0v11H0z" fill="#dcdcdc" /></Ic></Corner>
            <ColHead $on>A</ColHead>
            {cols.map(c => <ColHead key={c}>{c}</ColHead>)}
            <ColHead $pl={28}>J</ColHead>
            {Array.from({ length: 23 }, (_, i) => i + 1).map(r => {
              const on = r <= 4;
              const tone = r === 1 ? "head" : r === 3 ? "b" : on ? "a" : undefined;
              return (
                <React.Fragment key={r}>
                  <RowHead $on={on}>{r}</RowHead>
                  <Cell $tone={tone}>
                    {r === 1 && <CellText $head>Items</CellText>}
                    {urls[r] && <CellText>{urls[r]}</CellText>}
                    {r === 1 && <FilterBtn><Caret $c="#555" /></FilterBtn>}
                  </Cell>
                  {cols.map(c => <Cell key={c} />)}
                  <Cell />
                </React.Fragment>
              );
            })}
            <Selection><FillHandle /></Selection>
            <QuickBtn><Quick /></QuickBtn>
          </Grid>
          <VScroll>
            <ScrollBtn><Tri d="u" c="#555" /></ScrollBtn>
            <VThumb />
            <VTrack />
            <ScrollBtn><Tri d="d" c="#555" /></ScrollBtn>
          </VScroll>
        </Sheet>

        <TabsBar>
          <Nav>
            <Tri d="l" c="#217346" />
            <Slot $w={5} $ml={18}><Tri d="r" c="#c4c4c4" /></Slot>
            <Slot $w={14} $ml={15}>...</Slot>
          </Nav>
          {sheets.map(([n, w, on], i) => (
            <SheetTab key={n} $w={w} $on={!!on} $sep={!on && i !== 2}>{n}</SheetTab>
          ))}
          <AddSheet>
            <Ic w={18} h={16}>
              <circle cx="9" cy="8" r="7" stroke="#777" /><path d="M9 4.5v7M5.5 8h7" stroke="#555" strokeWidth="1.3" />
            </Ic>
          </AddSheet>
          <HDots><Dots /></HDots>
          <HScroll>
            <ScrollBtn $w={15} $h={16}><Tri d="l" c="#555" /></ScrollBtn>
            <HThumb />
            <HTrack />
            <ScrollBtn $w={14} $h={16}><Tri d="r" c="#555" /></ScrollBtn>
          </HScroll>
        </TabsBar>

        <Status>
          <Ready>READY</Ready>
          <MacroIco />
          <Count>COUNT: 4</Count>
          <ViewBtn $on $w={32}><NormalView /></ViewBtn>
          <ViewBtn $w={33}><LayoutView /></ViewBtn>
          <ViewBtn $w={33}><BreakView /></ViewBtn>
          <Slot $w={8} $ml={3}><Ic w={7} h={2}><path d="M0 1h7" stroke="#e8f1ec" strokeWidth="2" /></Ic></Slot>
          <ZoomTrack><ZoomThumb /></ZoomTrack>
          <Slot $w={8} $ml={2}><Ic w={9} h={9}><path d="M0 4.5h9M4.5 0v9" stroke="#e8f1ec" strokeWidth="2" /></Ic></Slot>
          <Pct>100%</Pct>
        </Status>
      </Win>
    </Page>
  );
}
